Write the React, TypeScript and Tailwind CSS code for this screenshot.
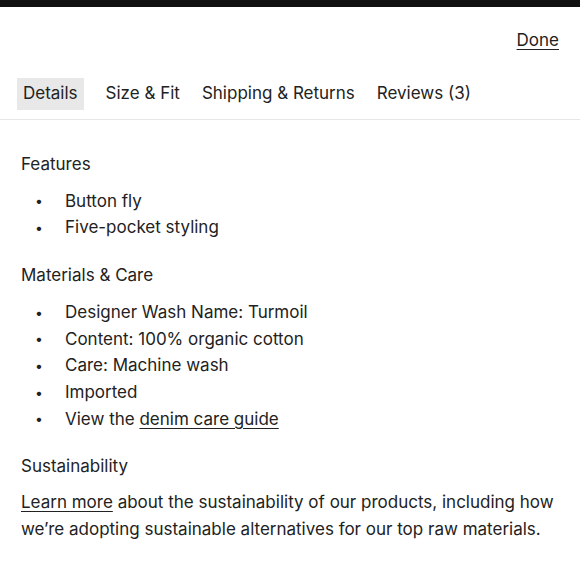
import React from 'react';

const TABS = ['Details', 'Size & Fit', 'Shipping & Returns', 'Reviews (3)'];

const FEATURES = ['Button fly', 'Five-pocket styling'];

const Bullets = ({ items }: { items: React.ReactNode[] }) => (
  <ul className="mt-[11px] flex flex-col">
    {items.map((item, i) => (
      <li key={i} className="flex h-[26.7px] items-center">
        <span className="w-[44px] pl-[14px] text-[14px] leading-none">•</span>
        <span>{item}</span>
      </li>
    ))}
  </ul>
);

export default function App() {
  return (
    <div
      className="h-[580px] w-[580px] overflow-hidden bg-white text-[17px] text-[#222]"
      style={{ fontFamily: 'Inter, "Liberation Sans", sans-serif' }}
    >
      <div className="h-[7px] bg-[#111]" />

      {/* Header */}
      <div className="flex h-[62px] items-center justify-end pr-[21px] pt-[6px]">
        <span className="underline underline-offset-[3px]">Done</span>
      </div>

      {/* Tabs */}
      <div className="flex items-center gap-[22px] border-b border-[#e6e6e6] pb-[9px] pl-[17px] pt-[9px]">
        {TABS.map((t, i) => (
          <div
            key={t}
            className={`flex h-[32px] items-center ${i === 0 ? 'bg-[#e8e8e8] px-[6px]' : 'px-0'}`}
          >
            {t}
          </div>
        ))}
      </div>

      {/* Content */}
      <div className="px-[21px] pt-[31px]">
        <h3 className="leading-[26px]">Features</h3>
        <Bullets items={FEATURES} />

        <h3 className="mt-[21px] leading-[26px]">Materials &amp; Care</h3>
        <Bullets
          items={[
            'Designer Wash Name: Turmoil',
            'Content: 100% organic cotton',
            'Care: Machine wash',
            'Imported',
            <>
              View the <span className="underline underline-offset-[3px]">denim care guide</span>
            </>,
          ]}
        />

        <h3 className="mt-[20px] leading-[26px]">Sustainability</h3>
        <p className="mt-[10px] leading-[27px]">
          <span className="underline underline-offset-[3px]">Learn more</span> about the sustainability of our
          products, including how we’re adopting sustainable alternatives for our top raw materials.
        </p>
      </div>
    </div>
  );
}
